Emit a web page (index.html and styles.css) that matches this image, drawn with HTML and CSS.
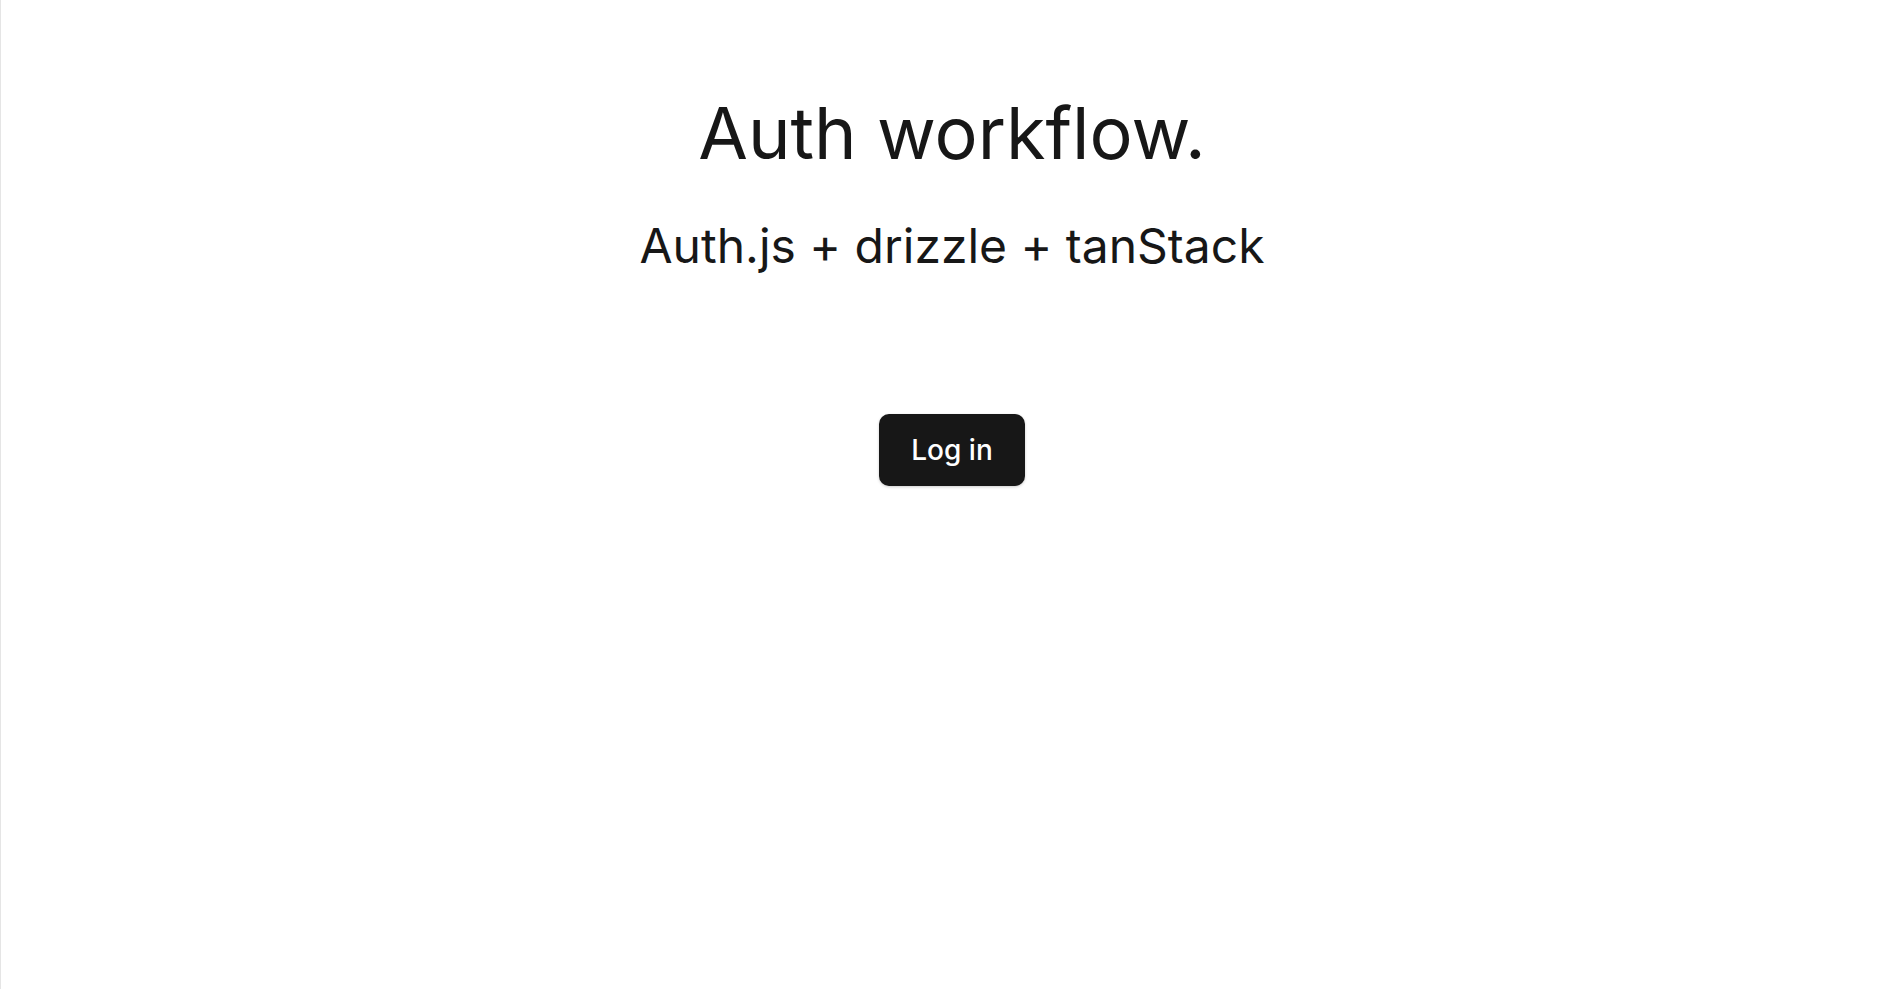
FILE: index.html
```html
<!DOCTYPE html>
<html lang="en">
<head>
<meta charset="utf-8">
<title>Auth workflow</title>
<link rel="stylesheet" href="styles.css">
</head>
<body>
<main class="page">
  <h1 class="title">Auth workflow.</h1>
  <p class="subtitle">Auth.js + drizzle + tanStack</p>
  <button class="login" type="button">Log in</button>
</main>
</body>
</html>
```

FILE: styles.css
```css
html, body {
  margin: 0;
  padding: 0;
  height: 100%;
  background: #ffffff;
}
body {
  font-family: Inter, "Noto Sans", sans-serif;
  color: #171717;
  border-left: 1px solid #e5e5e5;
  box-sizing: border-box;
}
.page {
  display: flex;
  flex-direction: column;
  align-items: center;
  padding-top: 97px;
}
.title {
  margin: 0;
  font-size: 72px;
  font-weight: 400;
  line-height: 1;
}
.subtitle {
  margin: 53px 0 0;
  font-size: 48px;
  font-weight: 400;
  line-height: 1;
}
.login {
  margin-top: 144px;
  width: 146px;
  height: 72px;
  border: none;
  border-radius: 10px;
  background: #171717;
  color: #ffffff;
  font-family: Inter, "Noto Sans", sans-serif;
  font-size: 28px;
  font-weight: 500;
  box-shadow: 0 1px 3px rgba(0,0,0,0.2);
  cursor: pointer;
}
```
